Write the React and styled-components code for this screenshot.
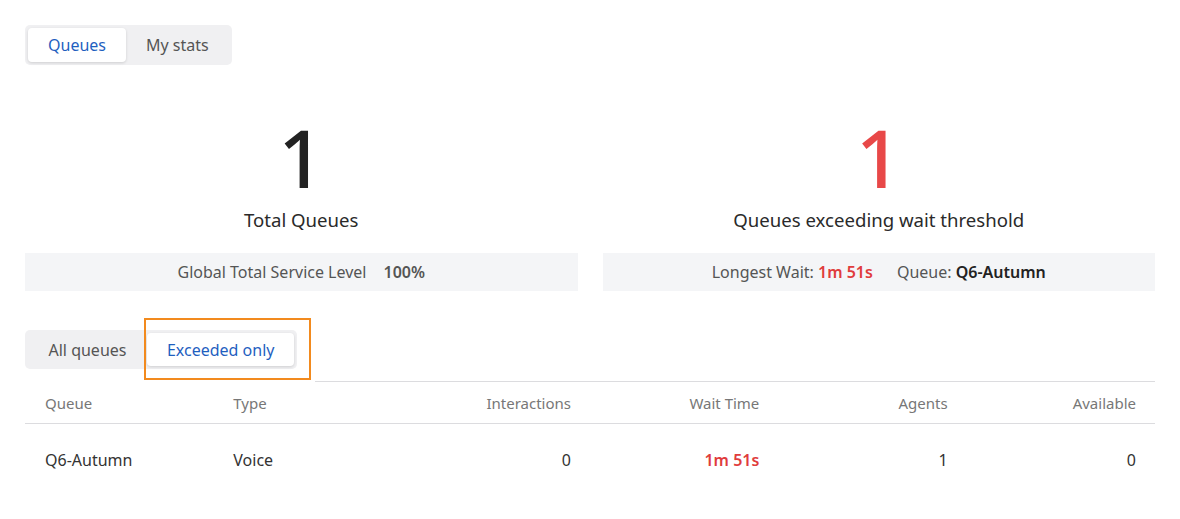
import React from "react";
import styled, { createGlobalStyle } from "styled-components";

const Global = createGlobalStyle`
  html, body { margin: 0; padding: 0; background: #fff; }
  body { font-family: "Noto Sans", "Open Sans", sans-serif; color: #333; }
  * { box-sizing: border-box; }
`;

const Page = styled.div`
  width: 1180px;
  height: 519px;
  padding: 25px 25px 0 25px;
  background: #fff;
  position: relative;
`;

const Segmented = styled.div`
  display: inline-flex;
  background: #f0f0f2;
  border-radius: 5px;
  padding: 3px;
  position: relative;
`;

const Seg = styled.div`
  height: ${(p) => p.$h || 34}px;
  display: flex;
  align-items: center;
  padding: 0 ${(p) => p.$pad || 20}px;
  font-size: 16px;
  border-radius: 4px;
  color: ${(p) => (p.$active ? "#1f5fbf" : "#555")};
  background: ${(p) => (p.$active ? "#fff" : "transparent")};
  box-shadow: ${(p) => (p.$active ? "0 1px 3px rgba(0,0,0,0.14)" : "none")};
`;

const Stats = styled.div`
  display: grid;
  grid-template-columns: 1fr 1fr;
  column-gap: 25px;
  margin-top: 52px;
`;

const StatCol = styled.div`
  display: flex;
  flex-direction: column;
  align-items: center;
`;

const BigNum = styled.div`
  font-size: 80px;
  line-height: 80px;
  font-weight: 500;
  color: ${(p) => (p.$red ? "#e84848" : "#222")};
`;

const StatLabel = styled.div`
  margin-top: 11px;
  font-size: 18.6px;
  line-height: 24px;
  color: #2a2a2a;
`;

const InfoBar = styled.div`
  margin-top: 21px;
  align-self: stretch;
  height: 38px;
  background: #f4f5f7;
  display: flex;
  align-items: center;
  justify-content: center;
  gap: ${(p) => p.$gap || 16}px;
  font-size: 16px;
  color: #555;
`;

const Strong = styled.span`
  font-weight: 600;
  color: ${(p) => (p.$red ? "#e03c3c" : p.$dark ? "#222" : "#555")};
`;

const FilterRow = styled.div`
  margin-top: 39px;
  position: relative;
  display: flex;
`;

const Highlight = styled.div`
  position: absolute;
  left: 119px;
  top: -12px;
  width: 167px;
  height: 62px;
  border: 2px solid #f28a1e;
  pointer-events: none;
`;

const TopRule = styled.div`
  margin-left: 290px;
  margin-top: 12px;
  height: 1px;
  background: #dcdcdf;
`;

const Row = styled.div`
  display: grid;
  grid-template-columns: repeat(6, 1fr);
  height: ${(p) => p.$h}px;
  align-items: center;
  border-bottom: ${(p) => (p.$border ? "1px solid #dcdcdf" : "none")};
`;

const Cell = styled.div`
  padding: 0 19px 0 20px;
  font-size: ${(p) => (p.$head ? 15 : 16)}px;
  text-align: ${(p) => (p.$right ? "right" : "left")};
  color: ${(p) => (p.$head ? "#777" : p.$red ? "#e03c3c" : "#333")};
  font-weight: ${(p) => (p.$red ? 600 : 400)};
`;

const cols = [
  { key: "queue", label: "Queue" },
  { key: "type", label: "Type" },
  { key: "interactions", label: "Interactions", right: true },
  { key: "wait", label: "Wait Time", right: true },
  { key: "agents", label: "Agents", right: true },
  { key: "available", label: "Available", right: true },
];

const rows = [
  { queue: "Q6-Autumn", type: "Voice", interactions: "0", wait: "1m 51s", agents: "1", available: "0" },
];

export default function App() {
  return (
    <>
      <Global />
      <Page>
        <Segmented>
          <Seg $active>Queues</Seg>
          <Seg>My stats</Seg>
        </Segmented>

        <Stats>
          <StatCol>
            <BigNum>1</BigNum>
            <StatLabel>Total Queues</StatLabel>
            <InfoBar $gap={17}>
              <span>Global Total Service Level</span>
              <Strong>100%</Strong>
            </InfoBar>
          </StatCol>
          <StatCol>
            <BigNum $red>1</BigNum>
            <StatLabel>Queues exceeding wait threshold</StatLabel>
            <InfoBar $gap={24}>
              <span>
                Longest Wait: <Strong $red>1m 51s</Strong>
              </span>
              <span>
                Queue: <Strong $dark>Q6-Autumn</Strong>
              </span>
            </InfoBar>
          </StatCol>
        </Stats>

        <FilterRow>
          <Segmented>
            <Seg $h={33} $pad={20.5}>All queues</Seg>
            <Seg $h={33} $pad={20} $active>Exceeded only</Seg>
          </Segmented>
          <Highlight />
        </FilterRow>

        <TopRule />
        <Row $h={42} $border>
          {cols.map((c) => (
            <Cell key={c.key} $head $right={c.right}>
              {c.label}
            </Cell>
          ))}
        </Row>
        {rows.map((r, i) => (
          <Row key={i} $h={71}>
            {cols.map((c) => (
              <Cell key={c.key} $right={c.right} $red={c.key === "wait"}>
                {r[c.key]}
              </Cell>
            ))}
          </Row>
        ))}
      </Page>
    </>
  );
}
